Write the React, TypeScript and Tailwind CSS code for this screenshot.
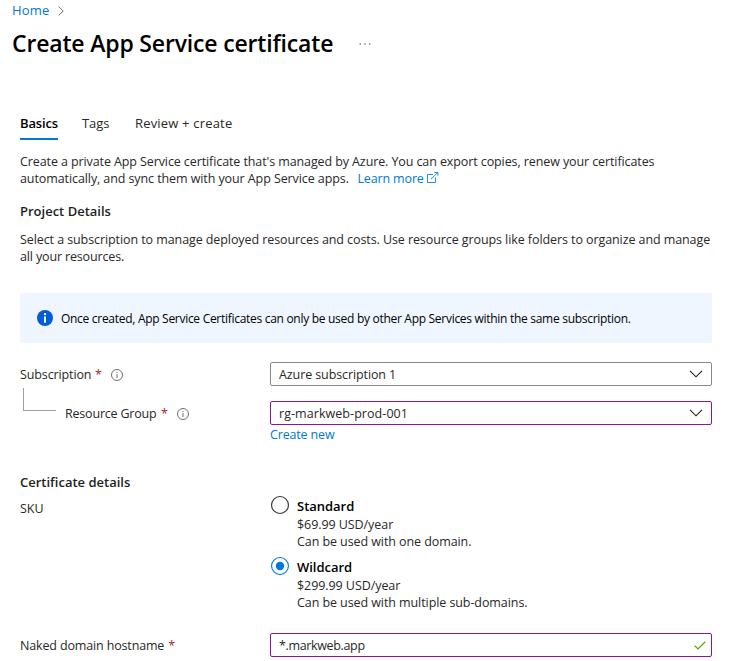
import type { ReactNode } from "react";

function Line({ children, className = "" }: { children: ReactNode; className?: string }) {
  return <div className={`flex h-[17px] items-center whitespace-nowrap leading-[17px] ${className}`}>{children}</div>;
}

function InfoOutline() {
  return (
    <svg width="12" height="12" viewBox="0 0 12 12" fill="none" stroke="#605e5c" strokeWidth="0.9">
      <circle cx="6" cy="6" r="5.5" />
      <path d="M6 5V9" />
      <path d="M6 3V4" />
    </svg>
  );
}

function Chevron() {
  return (
    <svg width="14" height="8" viewBox="0 0 14 8" fill="none" stroke="#201f1e" strokeWidth="1.15">
      <path d="M1 0.8L7 6.8L13 0.8" />
    </svg>
  );
}

function Required() {
  return <span className="ml-1 text-[#a4262c]">*</span>;
}

function Select({ value, border }: { value: string; border: string }) {
  return (
    <div className={`flex h-6 w-[442px] items-center justify-between rounded-[2px] border pr-2 pl-2 ${border}`}>
      {value}
      <Chevron />
    </div>
  );
}

function Radio({ name, price, note, checked }: { name: string; price: string; note: string; checked: boolean }) {
  return (
    <div className="flex">
      <svg className="ml-px shrink-0" width="18" height="18" viewBox="0 0 18 18" fill="none">
        <circle cx="9" cy="9" r="8.45" stroke={checked ? "#0078d4" : "#323130"} strokeWidth="1.1" />
        {checked && <circle cx="9" cy="9" r="4.2" fill="#0078d4" />}
      </svg>
      <div className="ml-2 pt-0.5">
        <Line className="mb-px text-[13px] font-semibold tracking-[-0.02px] text-black">{name}</Line>
        <Line className="tracking-[-0.07px]">{price}</Line>
        <Line className="tracking-[-0.08px]">{note}</Line>
      </div>
    </div>
  );
}

export default function App() {
  return (
    <main className="h-[661px] w-[733px] overflow-hidden bg-white font-['Open_Sans','Noto_Sans',sans-serif] text-[12.5px] text-[#292827]">
      <nav className="flex h-[21px] items-center gap-2 pl-3 text-[13px] tracking-[0.2px] text-[#0078d4]">
        <span>Home</span>
        <svg width="6" height="10" viewBox="0 0 6 10" fill="none" stroke="#605e5c" strokeWidth="0.9">
          <path d="M0.6 0.5L5.2 5L0.6 9.5" />
        </svg>
      </nav>
      <header className="flex h-[45px] items-center pl-3">
        <h1 className="w-[347px] text-[23px] leading-[45px] font-semibold tracking-[-0.17px] whitespace-nowrap text-black">Create App Service certificate</h1>
        <svg width="12" height="2" viewBox="0 0 12 2" fill="#605e5c">
          <circle cx="1.2" cy="1" r="0.8" />
          <circle cx="6" cy="1" r="0.8" />
          <circle cx="10.8" cy="1" r="0.8" />
        </svg>
      </header>
      <div className="pl-5">
        <div className="mt-[40px] flex h-[34px] gap-6 text-[13px] leading-[34px] whitespace-nowrap">
          <span className="w-[38px] border-b-2 border-[#0078d4] font-semibold tracking-[-0.15px] text-black">Basics</span>
          <span className="w-[29px] tracking-[-0.1px]">Tags</span>
          <span className="tracking-[0.18px]">Review + create</span>
        </div>
        <div className="mt-[13px]">
          <Line className="tracking-[-0.1px]">Create a private App Service certificate that's managed by Azure. You can export copies, renew your certificates</Line>
          <Line className="tracking-[-0.09px]">
            <span className="w-[337.5px]">automatically, and sync them with your App Service apps.</span>
            <a className="w-[65px] tracking-[-0.15px] text-[#0078d4]">Learn more</a>
            <svg className="ml-1 -mt-[3px]" width="12" height="11" viewBox="0 0 12 11" fill="none" stroke="#0078d4" strokeWidth="0.85">
              <path d="M6 2.5H0.5V10.5H8.5V5.5" />
              <path d="M4 7L10.7 0.6M7.5 0.5H10.9V3.8" />
            </svg>
          </Line>
        </div>
        <Line className="mt-4 text-[13px] font-semibold text-[#201f1e]">Project Details</Line>
        <div className="mt-[11px]">
          <Line className="tracking-[-0.085px]">Select a subscription to manage deployed resources and costs. Use resource groups like folders to organize and manage</Line>
          <Line className="tracking-[-0.15px]">all your resources.</Line>
        </div>
        <div className="mt-7 flex h-[50px] w-[692px] items-center rounded-[2px] bg-[#f0f6ff] pl-[17px] text-black">
          <svg width="16" height="16" viewBox="0 0 16 16">
            <circle cx="8" cy="8" r="8" fill="#015cda" />
            <circle cx="8" cy="4.1" r="1.2" fill="#fff" />
            <path d="M7 6.4H9V12.8H7Z" fill="#fff" />
          </svg>
          <span className="ml-2 pt-0.5 whitespace-nowrap text-[12px] tracking-[-0.29px]">Once created, App Service Certificates can only be used by other App Services within the same subscription.</span>
        </div>
        <div className="mt-[19px] flex h-6 leading-[17px]">
          <div className="flex w-[250px] items-center pt-px tracking-[-0.12px]">
            <span className="w-[71px]">Subscription</span><Required /><span className="ml-[9px] pt-px"><InfoOutline /></span>
          </div>
          <div className="tracking-[-0.1px]"><Select value="Azure subscription 1" border="border-[#8a8886]" /></div>
        </div>
        <div className="mt-[15px] flex h-6 leading-[17px]">
          <div className="flex w-[250px] items-center pt-px tracking-[-0.12px] whitespace-nowrap">
            <span className="-mt-[29px] mr-[9px] ml-[3px] h-[23px] w-[33px] border-b border-l border-[#a19f9d]" />
            <span className="w-[92px] tracking-[-0.2px]">Resource Group</span><Required /><span className="ml-[9px] pt-px"><InfoOutline /></span>
          </div>
          <div className="tracking-[0.06px]"><Select value="rg-markweb-prod-001" border="border-[#881798]" /></div>
        </div>
        <Line className="mt-px pl-[250px] tracking-[-0.16px] text-[#0078d4]">Create new</Line>
        <Line className="mt-[31px] text-[13px] font-semibold text-[#201f1e]">Certificate details</Line>
        <div className="mt-[5px] flex h-[137px]">
          <Line className="mt-1 w-[250px]">SKU</Line>
          <div className="flex flex-col gap-[7px]">
            <Radio name="Standard" price="$69.99 USD/year" note="Can be used with one domain." checked={false} />
            <Radio name="Wildcard" price="$299.99 USD/year" note="Can be used with multiple sub-domains." checked />
          </div>
        </div>
        <div className="flex h-6 leading-[17px]">
          <div className="flex w-[250px] items-center pt-px tracking-[-0.15px]">Naked domain hostname<Required /></div>
          <div className="flex h-6 w-[442px] items-center justify-between rounded-[2px] border border-[#881798] pr-[5px] pl-2">
            <span className="tracking-[-0.35px]">*.markweb.app</span>
            <svg width="12" height="9" viewBox="0 0 12 9" fill="none" stroke="#57a300" strokeWidth="1.3">
              <path d="M0.6 4.6L4 7.9L11.4 0.6" />
            </svg>
          </div>
        </div>
      </div>
    </main>
  );
}
